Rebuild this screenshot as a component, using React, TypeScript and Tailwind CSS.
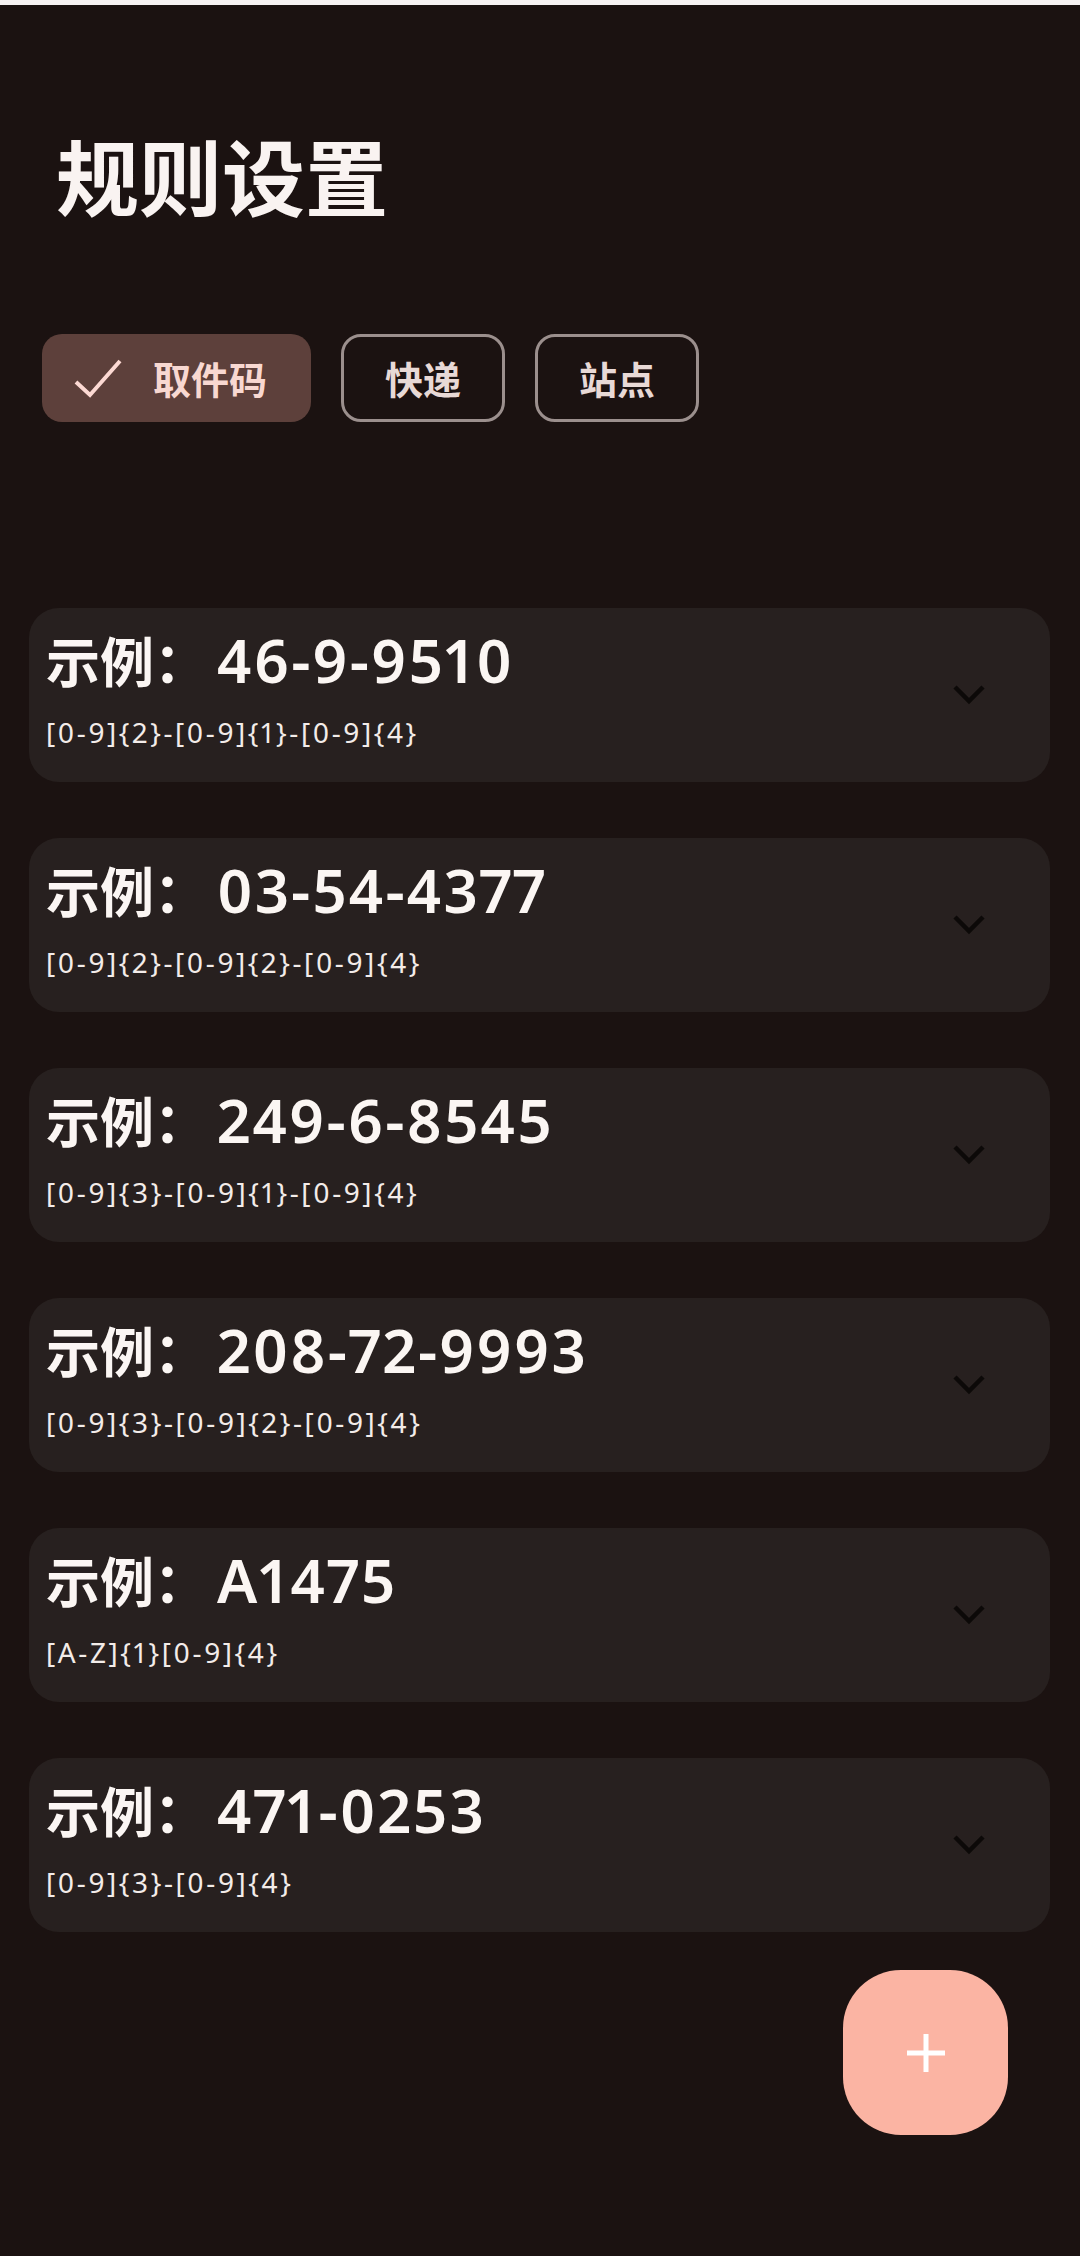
import React from "react";

const rules = [
  { example: "46-9-9510", regex: "[0-9]{2}-[0-9]{1}-[0-9]{4}" },
  { example: "03-54-4377", regex: "[0-9]{2}-[0-9]{2}-[0-9]{4}" },
  { example: "249-6-8545", regex: "[0-9]{3}-[0-9]{1}-[0-9]{4}" },
  { example: "208-72-9993", regex: "[0-9]{3}-[0-9]{2}-[0-9]{4}" },
  { example: "A1475", regex: "[A-Z]{1}[0-9]{4}" },
  { example: "471-0253", regex: "[0-9]{3}-[0-9]{4}" },
];

const cjk = { fontFamily: '"Noto Sans CJK SC", "Noto Sans", sans-serif' };
const latin = { fontFamily: '"Noto Sans", "Noto Sans CJK SC", sans-serif' };

function Chevron() {
  return (
    <svg width="36" height="24" viewBox="0 0 36 24" className="shrink-0 self-center mr-[63px]">
      <polyline points="4,4 18,18 32,4" fill="none" stroke="#0c0908" strokeWidth="4.5" />
    </svg>
  );
}

export default function App() {
  return (
    <div className="relative w-[1080px] h-[2256px] overflow-hidden bg-[#1b1211]" style={cjk}>
      <div className="h-[5px] bg-[#f7f3f3]" />
      <h1 className="pl-[56px] mt-[128px] text-[83px] leading-none font-bold text-[#f9f3f1]">规则设置</h1>

      <div className="flex gap-[30px] pl-[42px] mt-[118px]">
        <div className="flex items-center h-[88px] w-[269px] rounded-[20px] bg-[#5d403b] pl-[31px]">
          <svg width="50" height="42" viewBox="0 0 50 42" className="shrink-0">
            <polyline points="3,25 17,38 47,4" fill="none" stroke="#fcd9d3" strokeWidth="4" />
          </svg>
          <span className="ml-[30px] text-[38px] leading-none font-bold text-[#f8d8d1]">取件码</span>
        </div>
        <div className="flex items-center justify-center h-[88px] w-[164px] rounded-[20px] border-[3px] border-[#9b8f8d] text-[38px] leading-none font-bold text-[#e8d9d6]">
          快递
        </div>
        <div className="flex items-center justify-center h-[88px] w-[164px] rounded-[20px] border-[3px] border-[#9b8f8d] text-[38px] leading-none font-bold text-[#e8d9d6]">
          站点
        </div>
      </div>

      <div className="flex flex-col gap-[56px] ml-[29px] w-[1021px] mt-[186px]">
        {rules.map((r) => (
          <div key={r.example} className="flex justify-between h-[174px] rounded-[30px] bg-[#27201f] pl-[17px]">
            <div className="flex flex-col pt-[22px]">
              <div className="flex items-baseline text-[#fbf6f3]">
                <span className="text-[54px] leading-none font-bold">示例：</span>
                <span className="ml-[9px] text-[60px] leading-none font-semibold tracking-[2px] proportional-nums" style={latin}>
                  {r.example}
                </span>
              </div>
              <div className="mt-[28px] text-[28px] leading-none tracking-[2.6px] proportional-nums text-[#f3ece9]" style={latin}>
                {r.regex}
              </div>
            </div>
            <Chevron />
          </div>
        ))}
      </div>

      <button className="absolute left-[843px] top-[1970px] flex h-[165px] w-[165px] items-center justify-center rounded-[58px] bg-[#fbb4a3]">
        <svg width="40" height="40" viewBox="0 0 40 40">
          <path d="M20 1V39M1 20H39" stroke="#ffffff" strokeWidth="5" />
        </svg>
      </button>
    </div>
  );
}
